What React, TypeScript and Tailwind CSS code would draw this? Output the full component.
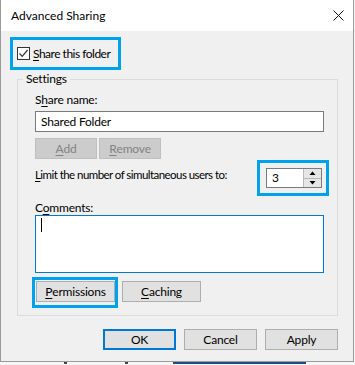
import React from "react";

const font = { fontFamily: "Lato, 'Liberation Sans', sans-serif" };

function U({ children }: { children: React.ReactNode }) {
  return <span className="underline decoration-[1px] underline-offset-[2px]">{children}</span>;
}

function Btn({
  children,
  w,
  disabled,
  def,
}: {
  children: React.ReactNode;
  w: string;
  disabled?: boolean;
  def?: boolean;
}) {
  const base = "h-[21px] flex items-center justify-center text-[12px] leading-[16px] ";
  if (disabled)
    return <div className={base + w + " bg-[#cccccc] border border-[#bfbfbf] text-[#838383]"}>{children}</div>;
  if (def)
    return <div className={base + w + " bg-[#e1e1e1] border-2 border-[#0078d7] text-black"}>{children}</div>;
  return <div className={base + w + " bg-[#e1e1e1] border border-[#adadad] text-black"}>{children}</div>;
}

export default function App() {
  return (
    <div className="w-[355px] h-[365px] bg-[#f7f7f7] flex flex-col tracking-[-0.2px]" style={font}>
      <div className="w-[354px] h-[362px] flex flex-col border-l border-r border-b border-[#9b9b9b] bg-[#f0f0f0]">
        {/* Title bar */}
        <div className="h-[31px] bg-white flex items-center justify-between pl-[10px] pr-[9px]">
          <span className="text-[12px] leading-[16px] text-black tracking-[0px]">Advanced Sharing</span>
          <svg width="11" height="11" viewBox="0 0 11 11">
            <path d="M0.5 0.5 L10.5 10.5 M10.5 0.5 L0.5 10.5" stroke="#111" strokeWidth="1" />
          </svg>
        </div>

        {/* Body */}
        <div className="flex-1 flex flex-col pl-[9px] pt-[6px]">
          <div className="w-[111px] h-[33px] border-[3px] border-[#00a2ed] flex items-center pl-[4px]">
            <div className="w-[13px] h-[13px] border border-[#333333] bg-white flex items-center justify-center">
              <svg width="11" height="11" viewBox="0 0 11 11">
                <path d="M1.5 5.5 L4.2 8.3 L9.6 2" stroke="#333" strokeWidth="1.2" fill="none" />
              </svg>
            </div>
            <span className="ml-[3px] text-[12px] leading-[16px] text-black tracking-[-0.5px]">
              <U>S</U>hare this folder
            </span>
          </div>

          {/* Settings group */}
          <div className="ml-[7px] mt-[9px] w-[321px] border border-[#dcdcdc] pl-[17px] pr-[13px] pb-[7px] flex flex-col">
            <span className="self-start -mt-[9px] -ml-[12px] px-[3px] bg-[#f0f0f0] text-[12px] leading-[16px] text-black">
              Settings
            </span>
            <span className="mt-[5px] text-[12px] leading-[16px] text-black">
              S<U>h</U>are name:
            </span>
            <div className="mt-[3px] h-[21px] w-full border border-[#7a7a7a] bg-white flex items-center pl-[5px] text-[12px] leading-[16px] text-black">
              Shared Folder
            </div>
            <div className="mt-[6px] flex gap-[2px]">
              <Btn w="w-[62px]" disabled>
                <U>A</U>dd
              </Btn>
              <Btn w="w-[62px]" disabled>
                <U>R</U>emove
              </Btn>
            </div>
            <div className="mt-[1px] -mr-[5px] flex justify-between items-start">
              <span className="mt-[7px] text-[11.5px] leading-[16px] text-black tracking-[-0.55px]">
                <U>L</U>imit the number of simultaneous users to:
              </span>
              <div className="w-[72px] h-[36px] border-[3px] border-[#00a2ed] pl-[6px] pt-[5px]">
                <div className="w-[56px] h-[20px] border border-[#7a7a7a] bg-white flex">
                  <div className="flex-1 flex items-center pl-[5px] text-[12px] leading-[16px] text-black">3</div>
                  <div className="w-[18px] h-full flex flex-col border-l border-[#b9b9b9] bg-[#e6e6e6]">
                    <div className="flex-1 flex items-center justify-center border-b border-[#b9b9b9]">
                      <svg width="7" height="4" viewBox="0 0 7 4">
                        <path d="M0.5 4 L3.5 0.5 L6.5 4 Z" fill="#000" />
                      </svg>
                    </div>
                    <div className="flex-1 flex items-center justify-center">
                      <svg width="7" height="4" viewBox="0 0 7 4">
                        <path d="M0.5 0 L3.5 3.5 L6.5 0 Z" fill="#000" />
                      </svg>
                    </div>
                  </div>
                </div>
              </div>
            </div>
            <span className="mt-[5px] text-[12px] leading-[14px] text-black">
              C<U>o</U>mments:
            </span>
            <div className="h-[58px] w-full border border-[#0078d7] bg-white pl-[5px] pt-[2px]">
              <div className="w-[1px] h-[14px] bg-black" />
            </div>
            <div className="mt-[4px] flex items-start">
              <div className="-ml-[3px] w-[86px] h-[31px] border-[3px] border-[#00a2ed] p-[1px]">
                <Btn w="w-[79px]">
                  <U>P</U>ermissions
                </Btn>
              </div>
              <div className="ml-[4px] mt-[4px]">
                <Btn w="w-[79px]">
                  <U>C</U>aching
                </Btn>
              </div>
            </div>
          </div>

          {/* Bottom buttons */}
          <div className="mt-[13px] pr-[15px] flex justify-end gap-[8px]">
            <Btn w="w-[73px]" def>
              OK
            </Btn>
            <Btn w="w-[73px]">Cancel</Btn>
            <Btn w="w-[73px]">Apply</Btn>
          </div>
        </div>
      </div>
      {/* background remnants below the dialog */}
      <div className="h-[3px] flex items-start">
        <div className="w-[64px]" />
        <div className="w-[3px] h-[2px] bg-[#444444]" />
        <div className="w-[58px]" />
        <div className="w-[3px] h-[2px] bg-[#444444]" />
        <div className="w-[45px]" />
        <div className="w-[133px] h-[2px] bg-[#1d4f86]" />
      </div>
    </div>
  );
}
